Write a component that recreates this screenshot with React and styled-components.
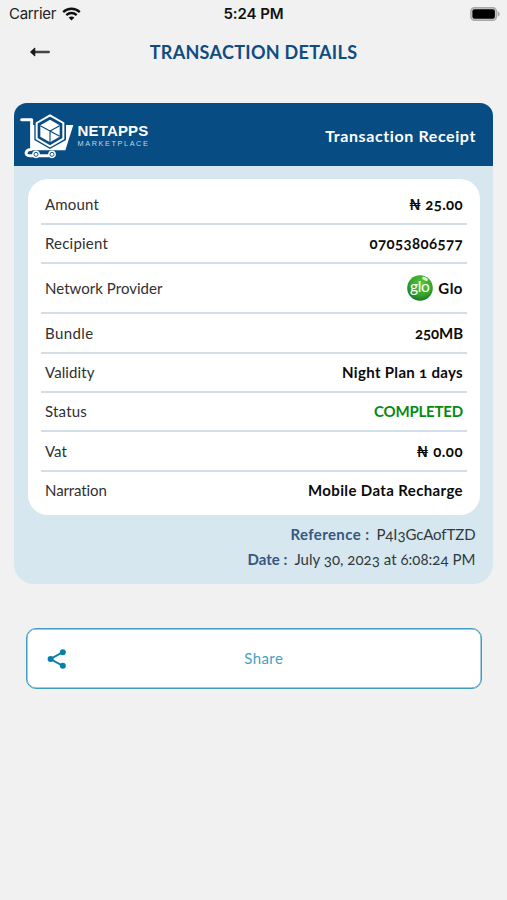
import React from "react";
import styled, { createGlobalStyle } from "styled-components";

const GlobalStyle = createGlobalStyle`
  * { box-sizing: border-box; }
  html, body { margin: 0; background: #f1f1f1; }
  body {
    font-family: Lato, "Open Sans", sans-serif;
    font-variant-numeric: oldstyle-nums;
    font-variant-ligatures: none;
    -webkit-font-smoothing: antialiased;
  }
  svg { display: block; }
`;

const Screen = styled.main`
  display: flex;
  flex-direction: column;
  width: 507px;
  height: 900px;
  overflow: hidden;
  background: #f1f1f1;
`;

const StatusBar = styled.div`
  display: grid;
  grid-template-columns: 1fr auto 1fr;
  align-items: center;
  height: 28px;
  padding: 0 7px 0 9px;
  font: 400 15px/28px Inter, sans-serif;
  font-variant-numeric: lining-nums;
  color: #222;
`;

const Carrier = styled.div`
  display: flex;
  align-items: center;
  gap: 6px;
  letter-spacing: -0.31px;
`;

const Clock = styled.div`
  margin-right: 2px;
  font-weight: 600;
  letter-spacing: -0.09px;
  color: #111;
`;

const BatterySlot = styled.div`
  display: flex;
  justify-content: flex-end;
`;

const TitleBar = styled.header`
  display: grid;
  grid-template-columns: 1fr auto 1fr;
  align-items: center;
  height: 48px;
  padding: 0 30px;
`;

const BackButton = styled.button`
  display: flex;
  width: 20px;
  padding: 0;
  border: 0;
  background: none;
`;

const Title = styled.h1`
  margin: 0;
  font-size: 18px;
  font-weight: 700;
  line-height: 24px;
  letter-spacing: 0.3px;
  color: #0f4c81;
`;

const Receipt = styled.section`
  display: flex;
  flex-direction: column;
  height: 481px;
  margin: 27px 14px 0;
  border-radius: 13px 13px 20px 20px;
  overflow: hidden;
  background: #d6e7ef;
`;

const ReceiptHeader = styled.div`
  display: flex;
  align-items: center;
  justify-content: space-between;
  height: 62.5px;
  padding: 3px 17px 0 6px;
  background: #074c82;
  color: #fff;
`;

const Brand = styled.div`
  display: flex;
  align-items: center;
  gap: 2.5px;
  padding-top: 1px;
`;

const BrandText = styled.div`
  display: flex;
  flex-direction: column;
  padding-bottom: 2px;
  font-family: "Liberation Sans", Arial, sans-serif;
`;

const BrandName = styled.span`
  font-size: 15px;
  font-weight: 700;
  line-height: 16px;
  letter-spacing: 0.18px;
`;

const BrandTag = styled.span`
  font-size: 7.3px;
  line-height: 9px;
  letter-spacing: 1.6px;
  color: #c5d6e4;
`;

const ReceiptTitle = styled.h2`
  margin: 0;
  font-size: 16px;
  font-weight: 700;
  line-height: 20px;
  letter-spacing: 0.6px;
`;

const Panel = styled.dl`
  display: flex;
  flex-direction: column;
  height: 336px;
  margin: 13.5px 13.5px 0;
  padding: 6.2px 13px 0 13.5px;
  border-radius: 20px;
  background: #fff;
`;

const Row = styled.div`
  display: flex;
  align-items: center;
  justify-content: space-between;
  height: ${(p) => (p.$tall ? "50.3px" : "39.35px")};
  padding: 0 3.5px 0.6px 4px;
  border-bottom: 2px solid #d2dfe9;
  &:last-child { border-bottom-color: transparent; }
`;

const Label = styled.dt`
  font-size: 15px;
  line-height: 20px;
  letter-spacing: ${(p) => p.$tracking}px;
  color: #303030;
`;

const Value = styled.dd`
  display: flex;
  align-items: center;
  gap: 5px;
  margin: 0;
  font-size: 15px;
  font-weight: 700;
  line-height: 20px;
  letter-spacing: ${(p) => p.$tracking}px;
  color: ${(p) => (p.$success ? "#078a12" : "#0b0b0b")};
`;

const Meta = styled.div`
  display: flex;
  flex-direction: column;
  align-items: flex-end;
  padding: 7px 17.5px 0 0;
`;

const MetaLine = styled.div`
  display: flex;
  gap: 7px;
  font-size: 15px;
  line-height: 25px;
`;

const MetaLabel = styled.span`
  font-weight: 700;
  letter-spacing: ${(p) => p.$tracking}px;
  color: #36587f;
`;

const MetaValue = styled.span`
  letter-spacing: ${(p) => p.$tracking}px;
  color: #303a40;
`;

const ShareButton = styled.button`
  display: grid;
  grid-template-columns: 20px 1fr;
  align-items: center;
  height: 61px;
  margin: 44px 25.5px 0 26px;
  padding: 0 20px 0 20px;
  border: 1px solid #3f9cc0;
  border-radius: 10px;
  background: #fff;
  box-shadow: inset 0 0 0 0.5px #3f9cc0;
  font: 400 15px/20px Lato, sans-serif;
  letter-spacing: 0.42px;
  color: #469fc2;
`;

const ShareLabel = styled.span`
  padding-bottom: 1px;
`;

const WifiIcon = () => (
  <svg width="19" height="14" viewBox="0 0 19 14" fill="none" stroke="#111" strokeWidth="2.3">
    <path d="M1.2 5.1C5.9.6 13.1.6 17.8 5.1" />
    <path d="M4.3 8.1c3-2.8 7.4-2.8 10.4 0" />
    <path d="M9.5 13.6 6.6 10.6c1.7-1.5 4.1-1.5 5.8 0Z" fill="#111" stroke="none" />
  </svg>
);

const BatteryIcon = () => (
  <svg width="30" height="14" viewBox="0 0 30 14">
    <rect x="0.9" y="0.7" width="25.5" height="12.6" rx="3.6" fill="#d0d0d0" stroke="#a8a8a8" strokeWidth="1.4" />
    <rect x="2.4" y="2.2" width="22.5" height="9.6" rx="2" fill="#000" />
    <path d="M27.6 4.2c2.8.9 2.8 4.7 0 5.6Z" fill="#a8a8a8" />
  </svg>
);

const ArrowIcon = () => (
  <svg width="20" height="10" viewBox="0 0 20 10">
    <path d="M5 5h13.8" stroke="#444" strokeWidth="2.3" strokeLinecap="round" />
    <path d="M.5 5 4.8 1v8Z" fill="#151515" stroke="#151515" strokeLinejoin="round" />
  </svg>
);

const CartLogo = () => (
  <svg width="55" height="46" viewBox="30 55 165 138" fill="none">
    <path
      d="M35 75H65V164C45 165 43 183 59 183H126"
      stroke="#fff"
      strokeWidth="9"
      strokeLinecap="round"
      strokeLinejoin="round"
    />
    <path d="M62 91H190L166 167H62Z" fill="#fff" />
    <path d="M120 54 168 81V136L120 163 73 136V81Z" fill="#074c82" />
    <path d="M120 62 160 85V132L120 155 80 132V85Z" stroke="#fff" strokeWidth="6" strokeLinejoin="round" />
    <path d="M120 75 149 92V126L120 143 91 126V92Z" fill="#fff" />
    <path d="M91 93 149 125M120 109 149 93M120 109V143" stroke="#074c82" strokeWidth="3.5" />
    {[78, 126].map((cx) => (
      <g key={cx}>
        <circle cx={cx} cy="179" r="11.5" fill="#fff" />
        <circle cx={cx} cy="179" r="6" fill="#fff" stroke="#074c82" strokeWidth="2.8" />
      </g>
    ))}
  </svg>
);

const GloText = styled.text`
  font: 400 15.5px Lato, sans-serif;
  letter-spacing: -0.3px;
`;

const GloLogo = () => (
  <svg width="26" height="26" viewBox="0 0 26 26">
    <defs>
      <radialGradient id="glo" cx="0.55" cy="0.35" r="0.65">
        <stop offset="0" stopColor="#5cc83a" />
        <stop offset="0.65" stopColor="#35a52b" />
        <stop offset="1" stopColor="#167a25" />
      </radialGradient>
    </defs>
    <circle cx="13" cy="13" r="12.8" fill="url(#glo)" />
    <ellipse cx="18" cy="3.8" rx="3.2" ry="1.6" fill="#d8f5c9" transform="rotate(25 18 3.8)" />
    <GloText x="12.8" y="16.8" textAnchor="middle" fill="#fff">glo</GloText>
  </svg>
);

const ShareIcon = () => (
  <svg width="20" height="20" viewBox="0 0 20 20" fill="#087fa8">
    <path d="M15.8 3.2 3.5 10l12.3 6.8" fill="none" stroke="#087fa8" strokeWidth="1.9" />
    <circle cx="15.8" cy="3.3" r="3" />
    <circle cx="3.6" cy="10" r="3" />
    <circle cx="15.8" cy="16.7" r="3" />
  </svg>
);

const rows = [
  { label: "Amount", lt: 0.17, value: "₦ 25.00", vt: 0.35 },
  { label: "Recipient", lt: 0.2, value: "07053806577", vt: 0.4 },
  { label: "Network Provider", lt: 0.03, value: "Glo", vt: 0.5, tall: true, icon: <GloLogo /> },
  { label: "Bundle", lt: 0.39, value: "250MB", vt: -0.07 },
  { label: "Validity", lt: 0.09, value: "Night Plan 1 days", vt: 0.32 },
  { label: "Status", lt: 0.2, value: "COMPLETED", vt: -0.19, success: true },
  { label: "Vat", lt: 0.07, value: "₦ 0.00", vt: 0.5 },
  { label: "Narration", lt: -0.1, value: "Mobile Data Recharge", vt: 0.37 },
];

export default function App() {
  return (
    <>
      <GlobalStyle />
      <Screen>
        <StatusBar>
          <Carrier>Carrier<WifiIcon /></Carrier>
          <Clock>5:24 PM</Clock>
          <BatterySlot><BatteryIcon /></BatterySlot>
        </StatusBar>
        <TitleBar>
          <BackButton aria-label="Back"><ArrowIcon /></BackButton>
          <Title>TRANSACTION DETAILS</Title>
        </TitleBar>
        <Receipt>
          <ReceiptHeader>
            <Brand>
              <CartLogo />
              <BrandText>
                <BrandName>NETAPPS</BrandName>
                <BrandTag>MARKETPLACE</BrandTag>
              </BrandText>
            </Brand>
            <ReceiptTitle>Transaction Receipt</ReceiptTitle>
          </ReceiptHeader>
          <Panel>
            {rows.map((r) => (
              <Row key={r.label} $tall={r.tall}>
                <Label $tracking={r.lt}>{r.label}</Label>
                <Value $tracking={r.vt} $success={r.success}>{r.icon}{r.value}</Value>
              </Row>
            ))}
          </Panel>
          <Meta>
            <MetaLine>
              <MetaLabel $tracking={0.39}>Reference :</MetaLabel>
              <MetaValue $tracking={-0.1}>P4I3GcAofTZD</MetaValue>
            </MetaLine>
            <MetaLine>
              <MetaLabel $tracking={0.04}>Date :</MetaLabel>
              <MetaValue $tracking={0.03}>July 30, 2023 at 6:08:24 PM</MetaValue>
            </MetaLine>
          </Meta>
        </Receipt>
        <ShareButton>
          <ShareIcon />
          <ShareLabel>Share</ShareLabel>
        </ShareButton>
      </Screen>
    </>
  );
}
